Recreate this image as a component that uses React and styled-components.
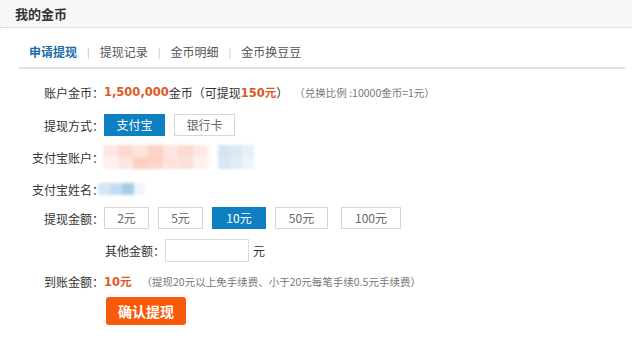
import React from "react";
import styled, { createGlobalStyle } from "styled-components";

const Global = createGlobalStyle`
  html, body { margin: 0; padding: 0; background: #fff; }
  body { font-family: "Noto Sans CJK SC", "DejaVu Sans", sans-serif; font-size: 12px; color: #333; }
`;

const Page = styled.div`
  width: 632px;
`;

const Header = styled.div`
  height: 27px;
  background: #f7f7f7;
  border-bottom: 1px dotted #cfcfcf;
  display: flex;
  align-items: center;
  padding-left: 15px;
`;

const Title = styled.h2`
  margin: 0;
  font-size: 13px;
  font-weight: bold;
  color: #333;
  line-height: 1;
`;

const Tabs = styled.nav`
  margin: 0 7px 0 19px;
  height: 41px;
  box-sizing: border-box;
  padding: 0 0 7px 10px;
  border-bottom: 2px solid #e2e2e2;
  display: flex;
  align-items: flex-end;
`;

const Tab = styled.span`
  font-size: 12px;
  line-height: 16px;
  color: ${(p) => (p.$active ? "#1b6ca6" : "#555")};
  font-weight: ${(p) => (p.$active ? "bold" : "normal")};
`;

const Sep = styled.span`
  color: #bbb;
  font-size: 10px;
  line-height: 16px;
  margin: 0 10px;
`;

const Form = styled.div`
  padding: 7px 0 0 23px;
`;

const Row = styled.div`
  display: flex;
  align-items: center;
  height: ${(p) => p.$h}px;
`;

const Label = styled.div`
  width: 81px;
  text-align: right;
  color: #333;
  font-size: 12px;
  flex-shrink: 0;
`;

const Value = styled.div`
  display: flex;
  align-items: center;
  font-size: 12px;
  color: #333;
`;

const Strong = styled.span`
  color: #e0581f;
  font-weight: bold;
  font-family: "DejaVu Sans", "Noto Sans CJK SC", sans-serif;
  font-size: 11.5px;
`;

const Note = styled.span`
  color: #777;
  font-size: 10.5px;
  margin-left: ${(p) => p.$ml || 0}px;
`;

const Choice = styled.button`
  height: 22px;
  width: ${(p) => p.$w}px;
  padding: 0;
  margin: 0 ${(p) => p.$mr ?? 9}px 0 0;
  font-family: "Noto Sans CJK SC", sans-serif;
  font-size: 12px;
  border: 1px solid ${(p) => (p.$on ? "#0e7fc0" : "#d6d6d6")};
  background: ${(p) => (p.$on ? "#0e7fc0" : "#fff")};
  color: ${(p) => (p.$on ? "#fff" : "#666")};
  box-sizing: border-box;
  cursor: pointer;
  line-height: 20px;
`;

const Mosaic = styled.div`
  display: flex;
  flex-wrap: wrap;
  width: ${(p) => p.$w}px;
  margin-left: ${(p) => p.$ml || 0}px;
  filter: blur(1.5px);
`;

const Cell = styled.div`
  width: ${(p) => p.$w}px;
  height: ${(p) => p.$h}px;
  background: ${(p) => p.$c};
`;

const Other = styled.span`
  margin-left: 1px;
`;

const Input = styled.input`
  width: 84px;
  height: 23px;
  box-sizing: border-box;
  border: 1px solid #dcdcdc;
  margin: 0 4px 0 0;
  padding: 0 4px;
  font-size: 12px;
`;

const Submit = styled.button`
  margin: 5px 0 0 83px;
  width: 80px;
  height: 28px;
  border: none;
  border-radius: 3px;
  background: #f85a0c;
  color: #fff;
  font-family: "Noto Sans CJK SC", sans-serif;
  font-weight: bold;
  font-size: 14px;
  cursor: pointer;
`;

const pink = [
  "#fde7e1", "#fcd9cf", "#fde3dc", "#fbd2c6", "#fde5df", "#fcdad0", "#fde8e3",
  "#fef0ec", "#fde6df", "#fbcfc2", "#fcd4c8", "#fde3dc", "#fce0d8", "#fef2ef",
];
const blue = ["#d3e5f2", "#dbe9f4", "#e6f0f7", "#d8e7f3", "#e0ecf5", "#eef4f9"];
const name = ["#d4e6f3", "#c3dcef", "#a8cbe5", "#eef4f9"];

export default function App() {
  return (
    <Page>
      <Global />
      <Header>
        <Title>我的金币</Title>
      </Header>
      <Tabs>
        <Tab $active>申请提现</Tab>
        <Sep>|</Sep>
        <Tab>提现记录</Tab>
        <Sep>|</Sep>
        <Tab>金币明细</Tab>
        <Sep>|</Sep>
        <Tab>金币换豆豆</Tab>
      </Tabs>
      <Form>
        <Row $h={32}>
          <Label>账户金币：</Label>
          <Value>
            <Strong>1,500,000</Strong>金币（可提现<Strong>150元</Strong>）
            <Note $ml={6}>（兑换比例 :10000金币=1元）</Note>
          </Value>
        </Row>
        <Row $h={34}>
          <Label>提现方式：</Label>
          <Value>
            <Choice $on $w={61}>支付宝</Choice>
            <Choice $w={61}>银行卡</Choice>
          </Value>
        </Row>
        <Row $h={30}>
          <Label>支付宝账户：</Label>
          <Value>
            <Mosaic $w={105} $ml={-1}>
              {pink.map((c, i) => (
                <Cell key={i} $w={15} $h={12} $c={c} />
              ))}
            </Mosaic>
            <Mosaic $w={36} $ml={10}>
              {blue.map((c, i) => (
                <Cell key={i} $w={12} $h={12} $c={c} />
              ))}
            </Mosaic>
          </Value>
        </Row>
        <Row $h={34}>
          <Label>支付宝姓名：</Label>
          <Value>
            <Mosaic $w={46} $ml={-6}>
              {name.map((c, i) => (
                <Cell key={i} $w={i === 3 ? 10 : 12} $h={12} $c={c} />
              ))}
            </Mosaic>
          </Value>
        </Row>
        <Row $h={24}>
          <Label>提现金额：</Label>
          <Value>
            <Choice $w={45}>2元</Choice>
            <Choice $w={45}>5元</Choice>
            <Choice $on $w={54}>10元</Choice>
            <Choice $w={53} $mr={13}>50元</Choice>
            <Choice $w={60}>100元</Choice>
          </Value>
        </Row>
        <Row $h={40}>
          <Label />
          <Value>
            <Other>其他金额：</Other>
            <Input />元
          </Value>
        </Row>
        <Row $h={22}>
          <Label>到账金额：</Label>
          <Value>
            <Strong>10元</Strong>
            <Note $ml={10}>（提现20元以上免手续费、小于20元每笔手续0.5元手续费）</Note>
          </Value>
        </Row>
        <Submit>确认提现</Submit>
      </Form>
    </Page>
  );
}
